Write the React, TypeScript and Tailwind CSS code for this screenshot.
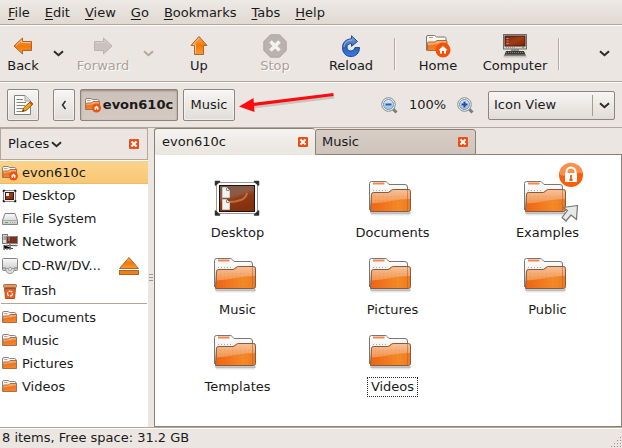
import React, { useState } from "react";

function Gradients() {
  return (
    <svg className="absolute h-0 w-0" aria-hidden="true">
      <defs>
        <linearGradient id="orangeFront" x1="0" y1="0" x2="0.25" y2="1">
          <stop offset="0" stopColor="#f7c49a" />
          <stop offset="0.4" stopColor="#f3a164" />
          <stop offset="0.55" stopColor="#ee7420" />
          <stop offset="1" stopColor="#f5862a" />
        </linearGradient>
        <linearGradient id="folderDeep" x1="0" y1="0" x2="1" y2="0">
          <stop offset="0" stopColor="#ee6414" />
          <stop offset="0.7" stopColor="#f48a26" />
          <stop offset="1" stopColor="#ee7a22" />
        </linearGradient>
        <linearGradient id="folderSheen" x1="0" y1="0" x2="0" y2="1">
          <stop offset="0" stopColor="#f7c096" />
          <stop offset="1" stopColor="#f1954f" />
        </linearGradient>
        <linearGradient id="paper" x1="0" y1="0" x2="0" y2="1">
          <stop offset="0" stopColor="#ffffff" />
          <stop offset="1" stopColor="#dddcd4" />
        </linearGradient>
        <linearGradient id="arrowOrange" x1="0" y1="0" x2="0" y2="1">
          <stop offset="0" stopColor="#f9a65c" />
          <stop offset="0.5" stopColor="#f57900" />
          <stop offset="1" stopColor="#f59a3a" />
        </linearGradient>
        <linearGradient id="reloadBlue" x1="0" y1="0" x2="0" y2="1">
          <stop offset="0" stopColor="#88a9d4" />
          <stop offset="0.55" stopColor="#2c62bd" />
          <stop offset="1" stopColor="#3a78e8" />
        </linearGradient>
        <linearGradient id="screen" x1="0" y1="0" x2="1" y2="1">
          <stop offset="0" stopColor="#6b2a1a" />
          <stop offset="0.5" stopColor="#a23c14" />
          <stop offset="1" stopColor="#7a2208" />
        </linearGradient>
        <linearGradient id="wallpaper" x1="0" y1="0" x2="0.4" y2="1">
          <stop offset="0" stopColor="#7a5b52" />
          <stop offset="0.45" stopColor="#8f5a42" />
          <stop offset="0.6" stopColor="#8c3d1c" />
          <stop offset="1" stopColor="#7c2c0d" />
        </linearGradient>
        <linearGradient id="metal" x1="0" y1="0" x2="0" y2="1">
          <stop offset="0" stopColor="#fafafa" />
          <stop offset="1" stopColor="#c8c8c6" />
        </linearGradient>
        <linearGradient id="lens" x1="0" y1="0" x2="0" y2="1">
          <stop offset="0" stopColor="#e3edf8" />
          <stop offset="1" stopColor="#9dbde6" />
        </linearGradient>
      </defs>
    </svg>
  );
}

function Chevron({ color = "#2e2a28", left = false }: { color?: string; left?: boolean }) {
  return left ? (
    <svg width="6" height="10" viewBox="0 0 6 10" fill="none">
      <path d="M4.5 1 1.5 5l3 4" stroke={color} strokeWidth="1.5" />
    </svg>
  ) : (
    <svg width="11" height="7" viewBox="0 0 11 7" fill="none">
      <path d="M1 1.2 5.5 5.2 10 1.2" stroke={color} strokeWidth="2" />
    </svg>
  );
}

function BackIcon({ dim = false }: { dim?: boolean }) {
  return (
    <svg width="24" height="24" viewBox="0 0 24 24">
      <g transform={dim ? "matrix(-1 0 0 1 24 0)" : undefined}>
        <path
          d="M3 12 11.5 4V7.500H20.500V16.500H11.500V20Z"
          fill={dim ? "#c9c3bd" : "url(#arrowOrange)"}
          stroke={dim ? "#bbb4ae" : "#a8652d"}
          strokeLinejoin="round"
        />
        <path d="M4.800 11.800 10.600 6.300v2.200H19.600" fill="none" stroke={dim ? "#d6d1cc" : "#fbc08a"} />
      </g>
    </svg>
  );
}

function UpIcon() {
  return (
    <svg width="24" height="24" viewBox="0 0 24 24">
      <path d="M12 2.500 20 11.500H16.500V20.500H7.500V11.500H4Z" fill="url(#arrowOrange)" stroke="#a8652d" strokeLinejoin="round" />
      <path d="M12 4.200 6 10.600h2.500v9" fill="none" stroke="#fbc08a" />
    </svg>
  );
}

function StopIcon() {
  return (
    <svg width="24" height="24" viewBox="0 0 24 24">
      <path d="M7.500.8h9l6.700 6.700v9l-6.700 6.700h-9L.8 16.500V7.500Z" fill="#b9b2ae" stroke="#ada6a3" />
      <path d="m7.500 7.500 9 9m0-9-9 9" stroke="#f5f1ee" strokeWidth="3.600" />
    </svg>
  );
}

function ReloadIcon() {
  return (
    <svg width="24" height="24" viewBox="0 0 24 24">
      <path
        d="M12.500 1.800 18.500 7.500 12.500 12.300V9.600C8.800 9.500 7.800 12 8.200 14.200C9.200 18 14.600 18 16 13.500H20.500C20.500 19 17 22.500 12 22.500C6.500 22.500 3.500 18.500 3.500 13.500C3.500 8.500 7 5 12.500 4.800Z"
        fill="url(#reloadBlue)"
        stroke="#1f4a8e"
        strokeLinejoin="round"
      />
      <path d="M5 13c.3-4 3.200-6.800 8-7" fill="none" stroke="#b9cde8" strokeWidth=".7" />
    </svg>
  );
}

function HomeBadge({ cx, cy, r }: { cx: number; cy: number; r: number }) {
  const s = r / 7.5;
  return (
    <g transform={`translate(${cx} ${cy}) scale(${s})`}>
      <circle r="7.5" fill="#f4520b" />
      <path d="M-4.500.3 0-4 4.500.3H3V3.500H1V1H-1V3.500H-3V.3Z" fill="#fff" />
    </g>
  );
}

function HomeIcon() {
  return (
    <svg width="26" height="24" viewBox="0 0 26 24">
      <path d="M1.500 16.500V3Q1.500 1.500 3 1.500H9.500L11.500 3H19.500Q21 3 21 4.500V16" fill="url(#paper)" stroke="#777" />
      <path d="M4 3.500H8" stroke="#f4863c" />
      <path d="M2.500 16.500V9.500Q2.500 8 4 8H10L12 6.500H21Q22 6.500 22 8V16.500Z" fill="url(#orangeFront)" stroke="#b06836" />
      <HomeBadge cx={18} cy={16} r={7.5} />
    </svg>
  );
}

function ComputerIcon() {
  return (
    <svg width="24" height="24" viewBox="0 0 24 24">
      <rect x="0.500" y="0.500" width="23" height="14.500" fill="#d6d6d0" stroke="#6b6b68" />
      <rect x="2" y="2" width="20" height="10" fill="url(#screen)" stroke="#4b1a10" />
      <path d="M3.500 4.500h2M3.500 7h2M3.500 9.500h2" stroke="#e58b6d" />
      <path d="M3 13.500h9" stroke="#999" strokeDasharray="1 1" />
      <path d="M19 13.500h2" stroke="#58bb28" />
      <path d="M8 15h8v2H8Z" fill="#8a8a86" />
      <path d="M3 17H21L23 22H1Z" fill="#3a3a3a" />
      <path d="M3 18.500H21M2.500 20.500H21.500" stroke="#888" strokeDasharray="1 1" />
      <path d="M.5 22.500H23.500" stroke="#c4c4bf" strokeWidth="2" />
    </svg>
  );
}

function EditIcon() {
  return (
    <svg width="22" height="22" viewBox="0 0 22 22">
      <path d="M2.500 1.500H13L18.500 7V20.500H2.500Z" fill="#fbfbfa" stroke="#82807c" strokeLinejoin="round" />
      <path d="M13 1.500V7H18.500" fill="#dedddb" stroke="#a2a09d" />
      <path d="M4.500 5.500H11M4.500 8.500H14M4.500 11.500H13M4.500 14.500H11M4.500 17.500H10" stroke="#858583" />
      <path d="M10.500 17.500 11.500 14 18.500 7.500 21 10 14 16.500Z" fill="#f7a511" stroke="#8e4d16" />
      <path d="m18.500 7.500 2.500 2.500-1.400 1.300-2.600-2.500Z" fill="#e34829" />
      <path d="m10.500 17.500.5-1.700 1.300 1.200Z" fill="#222" />
    </svg>
  );
}

function SmallFolder({ home = false }: { home?: boolean }) {
  return (
    <svg width="16" height="16" viewBox="0 0 16 16" className="shrink-0">
      <path d="M.5 12.500V3Q.5 1.500 2 1.500H6L7.500 2.500H12.500Q14 2.500 14 4V12" fill="url(#paper)" stroke="#858585" />
      <path d="M2 3.500H5.500" stroke="#f6975d" />
      <path d="M.8 12.500V7.500Q.8 6 2.500 6H6.500L8 4.500H14.500V12.500Z" fill="url(#orangeFront)" stroke="#ad6d49" />
      {home && <HomeBadge cx={11.5} cy={11} r={4.5} />}
    </svg>
  );
}

function SmallDesktop() {
  return (
    <svg width="16" height="16" viewBox="0 0 16 16" className="shrink-0">
      <rect x="1.500" y="2.500" width="12" height="11" fill="#f4f4f4" stroke="#888" />
      <rect x="3.500" y="4.500" width="8" height="7" fill="url(#screen)" stroke="#3c1810" />
      <rect x="4" y="5" width="3" height="3" fill="#f1efed" />
      <path d="M1.500 4V2.500H3M12 2.500h1.500V4M13.500 12v1.500H12M3 13.500H1.500V12" fill="none" stroke="#222" strokeWidth="1.500" />
    </svg>
  );
}

function DriveIcon() {
  return (
    <svg width="16" height="16" viewBox="0 0 16 16" className="shrink-0">
      <path d="M3 2.500H13L15.500 9.500V13.500H.5V9.500Z" fill="url(#metal)" stroke="#858585" strokeLinejoin="round" />
      <path d="M1 9.500H15" stroke="#aaa" />
      <path d="M3 11.500H6" stroke="#4fb51f" />
      <path d="M8 11.500h6" stroke="#aaa" strokeDasharray="1 1" />
    </svg>
  );
}

function NetworkIcon() {
  return (
    <svg width="16" height="16" viewBox="0 0 16 16" className="shrink-0">
      <rect x=".5" y=".5" width="5" height="9" fill="#ddd" stroke="#777" />
      <path d="M1.500 3h3M1.500 5h3" stroke="#666" />
      <rect x="4.500" y="2.500" width="11" height="7" fill="#7a3020" stroke="#888" />
      <path d="M6 4h2M6 6h2" stroke="#d98c73" />
      <path d="M5 11.500H15.500M2 11v3.500H11M8 10v4" stroke="#444" />
      <path d="M4 11.500H15M1 15h9" stroke="#777" strokeWidth="1.500" strokeDasharray="2 1" />
    </svg>
  );
}

function DiscIcon() {
  return (
    <svg width="16" height="16" viewBox="0 0 16 16" className="shrink-0">
      <rect x=".5" y=".5" width="15" height="12" rx="1" fill="url(#metal)" stroke="#858585" />
      <path d="M1 10h3M12 10h3" stroke="#777" />
      <path d="M3.500 10.500h9Q12 15.500 8 15.500T3.500 10.500Z" fill="#ddd" stroke="#999" />
      <circle cx="8" cy="11" r="1.500" fill="#fff" stroke="#999" />
    </svg>
  );
}

function TrashIcon() {
  return (
    <svg width="16" height="16" viewBox="0 0 16 16" className="shrink-0">
      <path d="M2.500 5H13.500L12.500 15.500H3.500Z" fill="#ed5d19" stroke="#b5501d" />
      <rect x="1.500" y="1.500" width="13" height="3" rx="1" fill="#f5934f" stroke="#9d7058" />
      <path d="M3 5.500H13" stroke="#6f5f58" />
      <circle cx="8" cy="10.500" r="2.500" fill="none" stroke="#fff" strokeWidth="1.200" strokeDasharray="4 1" />
    </svg>
  );
}

function EjectIcon() {
  return (
    <svg width="22" height="20" viewBox="0 0 22 20">
      <path d="M11 1.500 20.500 12.500H1.500Z" fill="url(#arrowOrange)" stroke="#a8652d" strokeLinejoin="round" />
      <rect x="1.500" y="14.500" width="19" height="4" fill="#f57f17" stroke="#a8652d" />
    </svg>
  );
}

function ZoomIcon({ plus = false }: { plus?: boolean }) {
  return (
    <svg width="17" height="17" viewBox="0 0 17 17">
      <path d="m11.500 11.500 4 4" stroke="#7b7b78" strokeWidth="3" />
      <circle cx="7.500" cy="7.500" r="6.800" fill="#f0f0ec" stroke="#8b8c89" />
      <circle cx="7.500" cy="7.500" r="5" fill="url(#lens)" stroke="#6b95cc" />
      <path d={plus ? "M4.500 7.500h6M7.500 4.500v6" : "M4.500 7.500h6"} stroke={plus ? "#244f91" : "#315f9f"} strokeWidth="2" />
    </svg>
  );
}

function CloseIcon() {
  return (
    <svg width="10" height="10" viewBox="0 0 10 10">
      <rect width="10" height="10" rx="1" fill="#ee4f16" />
      <path d="m2.500 2.500 5 5m0-5-5 5" stroke="#fff" strokeWidth="2" />
    </svg>
  );
}

function BigFolder({ locked = false }: { locked?: boolean }) {
  return (
    <svg width="53" height="48" viewBox="0 0 53 48" overflow="visible">
      <path d="M5 40H44" stroke="#000" strokeOpacity=".22" strokeWidth="2" strokeLinecap="round" />
      <path d="M6 41.500H43" stroke="#000" strokeOpacity=".1" strokeWidth="2" strokeLinecap="round" />
      <path d="M3.500 37V10.500Q3.500 8.500 5.500 8.500H19Q20.500 8.500 21.500 9.800L23 11.500H39Q41.500 11.500 41.500 14V36" fill="url(#paper)" stroke="#777874" />
      <path d="M7 10.500H18.500" stroke="#f4864b" strokeWidth="2" />
      <path d="M7 17.500H22" stroke="#aaa" strokeDasharray="1 2" />
      <path
        d="M4.500 38.500 5.500 21.500Q5.500 19.500 7.500 19.500H22Q23 19.500 24 18.300L25.300 17.300Q26 16.500 27.500 16.500H42.500Q44.500 16.500 44.500 18.500V36.500Q44.500 38.500 42.500 38.500Z"
        fill="url(#folderDeep)"
        stroke="#825c44"
      />
      <path d="M6 30.500V22Q6 20 8 20H22Q24 20 25.500 18 26.500 17 28 17H42Q44 17 44 19V26C31 26 19 29.500 6 30.500Z" fill="url(#folderSheen)" />
      <path d="M9 23.500H42M9 27.500H42M9 31.500H42M9 35.500H42" stroke="#d9601a" strokeOpacity=".22" strokeDasharray="1 3" />
      <path d="M41.500 17V38" stroke="#b9602a" strokeOpacity=".55" />
      {locked && (
        <g>
          <circle cx="50" cy="2" r="12" fill="#f75f0d" />
          <path d="M38.500 1.500a11.500 11.500 0 0 1 23-1C54-3 48 6 38.500 1.500Z" fill="#fbab72" opacity=".65" />
          <path d="M45.500 1v-2a4.500 4.500 0 0 1 9 0v2" fill="none" stroke="#fff" strokeWidth="2" />
          <rect x="44" y="0" width="12" height="9" fill="#fff" />
          <path d="M50 2v5M48.500 7h3" stroke="#e65c10" strokeWidth="1.800" />
          <path
            d="M56.500 32.500 42 34.500 46.500 37.500 41 44.500 45 48 50 42 55.500 46.500Z"
            fill="#e8e9e6"
            stroke="#747672"
            strokeWidth="1.200"
            strokeLinejoin="round"
          />
        </g>
      )}
    </svg>
  );
}

function BigDesktop() {
  return (
    <svg width="53" height="48" viewBox="0 0 53 48">
      <rect x="5.500" y="9.500" width="41" height="31" fill="#fff" stroke="#999" />
      <rect x="8.500" y="12.500" width="35" height="26" fill="url(#wallpaper)" stroke="#25110b" />
      <path d="M9 29Q19 27 26 28T43 21V38H9Z" fill="#8e3510" opacity=".5" />
      <path d="M18 29Q25 29 30 27T36 20" fill="none" stroke="#e79150" strokeOpacity=".6" strokeWidth="2" />
      <path d="M11.500 14.500h4l3 3v7h-7ZM11.500 26.500h4l3 3v7h-7Z" fill="#f2f2f0" stroke="#ccc" />
      <path d="M15.500 15v2.500h2.500M15.500 27v2.500h2.500" fill="none" stroke="#888" />
      <path d="M4.500 12V8.500H8.500ZM43.500 8.500h4V12ZM47.500 38v4h-4ZM8.500 42H4.500v-4Z" fill="#222" stroke="#333" strokeWidth="1.500" strokeLinejoin="round" />
    </svg>
  );
}

const menus = ["File", "Edit", "View", "Go", "Bookmarks", "Tabs", "Help"];

function ToolButton({ label, icon, width, disabled }: { label: string; icon: React.ReactNode; width: string; disabled?: boolean }) {
  return (
    <button
      disabled={disabled}
      className={`flex h-full flex-col items-center pt-2 ${width} ${disabled ? "text-[#aaa198] [text-shadow:1px_1px_0_#fff]" : ""}`}
    >
      {icon}
      <span className="leading-4">{label}</span>
    </button>
  );
}

function Separator() {
  return <div className="h-8 w-[2px] shrink-0 border-l border-r border-l-[#b5a99c] border-r-[#f8f6f4]" />;
}

const box =
  "flex h-8 items-center justify-center rounded-[2px] border border-[#8e867c] bg-linear-to-b from-[#f7f6f4] to-[#e1dcd6] shadow-[inset_0_0_0_1px_#ffffff80]";

const places = [
  { name: "evon610c", icon: <SmallFolder home /> },
  { name: "Desktop", icon: <SmallDesktop /> },
  { name: "File System", icon: <DriveIcon /> },
  { name: "Network", icon: <NetworkIcon /> },
  { name: "CD-RW/DV...", icon: <DiscIcon />, eject: true },
  { name: "Trash", icon: <TrashIcon /> },
];
const bookmarks = ["Documents", "Music", "Pictures", "Videos"];
const files = ["Desktop", "Documents", "Examples", "Music", "Pictures", "Public", "Templates", "Videos"];

export default function App() {
  const [tab, setTab] = useState("evon610c");
  return (
    <div className="flex h-screen flex-col overflow-hidden bg-[#ebe6e2] font-['DejaVu_Sans',sans-serif] text-[13px] leading-4 text-[#1a1a1a]">
      <Gradients />
      <nav className="flex h-[25px] shrink-0 items-center gap-px border-b border-[#b5a698] bg-linear-to-b from-[#ede9e5] to-[#e1d9d2] pt-px pl-px">
        {menus.map((m) => (
          <button key={m} className="px-[7px]">
            <span className="underline underline-offset-2">{m[0]}</span>
            {m.slice(1)}
          </button>
        ))}
      </nav>

      <div className="flex h-[57px] shrink-0 items-center border-t border-b border-t-white border-b-[#b5a698]">
        <ToolButton label="Back" width="w-[46px]" icon={<BackIcon />} />
        <button aria-label="Back history" className="flex w-6 justify-center">
          <Chevron />
        </button>
        <ToolButton label="Forward" width="w-[66px]" icon={<BackIcon dim />} disabled />
        <button aria-label="Forward history" disabled className="flex w-[25px] justify-center">
          <Chevron color="#b1a99f" />
        </button>
        <ToolButton label="Up" width="w-[76px]" icon={<UpIcon />} />
        <ToolButton label="Stop" width="w-[76px]" icon={<StopIcon />} disabled />
        <ToolButton label="Reload" width="w-[76px]" icon={<ReloadIcon />} />
        <div className="w-[5px]" />
        <Separator />
        <div className="w-1" />
        <ToolButton label="Home" width="w-[76px]" icon={<HomeIcon />} />
        <ToolButton label="Computer" width="w-[78px]" icon={<ComputerIcon />} />
        <div className="w-1" />
        <Separator />
        <button aria-label="More tools" className="mr-3 ml-auto">
          <Chevron />
        </button>
      </div>

      <div className="relative flex h-[46px] shrink-0 items-center border-t border-b border-t-white border-b-[#b5a698] px-[7px]">
        <button aria-label="Edit location" className={`${box} w-8`}>
          <EditIcon />
        </button>
        <button aria-label="Previous folders" className={`${box} ml-[14px] w-[22px]`}>
          <Chevron left />
        </button>
        <button className="ml-[5px] flex h-8 w-[98px] items-center justify-center gap-[2px] rounded-[2px] border border-[#8e8279] bg-linear-to-b from-[#cdc2b9] to-[#d4cac1] font-bold shadow-[inset_0_1px_2px_#978a7f]">
          <SmallFolder home />
          evon610c
        </button>
        <button className={`${box} ml-[5px] w-[52px]`}>Music</button>
        <svg className="absolute top-1 left-[230px]" width="112" height="34" viewBox="0 0 112 34">
          <path d="M104 10 23 20" stroke="#777" strokeOpacity=".3" strokeWidth="3" />
          <path d="M103.500 7.500 23 17.500" stroke="#fb0b0b" strokeWidth="3" />
          <path d="M9 19.500 23.500 11 24.500 25Z" fill="#fb0b0b" />
        </svg>
        <div className="ml-auto flex items-center">
          <button aria-label="Zoom out">
            <ZoomIcon />
          </button>
          <span className="w-[59px] text-center">100%</span>
          <button aria-label="Zoom in">
            <ZoomIcon plus />
          </button>
          <div className="relative ml-[14px] h-[29px] w-[127px]">
            <select
              aria-label="View mode"
              className="h-full w-full appearance-none rounded-[2px] border border-[#8e867c] bg-linear-to-b from-[#f7f6f4] to-[#e1dcd6] pl-[5px]"
            >
              <option>Icon View</option>
              <option>List View</option>
            </select>
            <div className="pointer-events-none absolute inset-y-1 right-0 flex w-[23px] items-center justify-center border-l border-[#a79c90]">
              <Chevron />
            </div>
          </div>
        </div>
      </div>

      <main className="flex min-h-0 flex-1">
        <aside className="flex w-[148px] shrink-0 flex-col bg-white">
          <div className="flex h-8 shrink-0 items-center justify-between border border-[#b5a698] bg-[#ebe6e2] pr-2 pl-[7px]">
            <button className="flex items-center gap-[2px]">
              Places
              <Chevron />
            </button>
            <button aria-label="Close side pane">
              <CloseIcon />
            </button>
          </div>
          <ul className="pt-px">
            {places.map((p, i) => (
              <li
                key={p.name}
                className={`flex items-center pl-[2px] ${p.eject ? "h-[26px]" : "h-[23px]"} ${
                  i === 0 ? "bg-linear-to-b from-[#fdd38b] to-[#f8c773] shadow-[inset_0_-1px_0_#e8bd6c]" : ""
                }`}
              >
                {p.icon}
                <span className="ml-1">{p.name}</span>
                {p.eject && (
                  <button aria-label="Eject" className="mr-2 ml-auto">
                    <EjectIcon />
                  </button>
                )}
              </li>
            ))}
          </ul>
          <hr className="mx-px mt-px mb-[2px] border-[#b5a698]" />
          <ul>
            {bookmarks.map((b) => (
              <li key={b} className="flex h-[23px] items-center gap-1 pl-[2px]">
                <SmallFolder />
                {b}
              </li>
            ))}
          </ul>
        </aside>
        <div className="flex w-[6px] shrink-0 items-center justify-center">
          <div className="flex flex-col gap-[2px]">
            <div className="h-px w-1 bg-[#a3978b]" />
            <div className="h-px w-1 bg-[#a3978b]" />
            <div className="h-px w-1 bg-[#a3978b]" />
          </div>
        </div>
        <section className="flex min-w-0 flex-1 flex-col">
          <div role="tablist" className="flex h-[27px] shrink-0 items-end">
            {["evon610c", "Music"].map((t) => (
              <div
                key={t}
                className={`flex w-[161px] items-center justify-between rounded-t-[3px] border-[#8e8071] pr-[7px] ${
                  t === tab
                    ? "h-[27px] border-t border-l bg-linear-to-b from-[#f5f3f0] to-[#e9e5df] pl-[7px]"
                    : "h-[26px] border bg-linear-to-b from-[#d8cec6] to-[#cec4bb] pl-[6px]"
                }`}
              >
                <button role="tab" aria-selected={t === tab} onClick={() => setTab(t)}>
                  {t}
                </button>
                <button aria-label={`Close ${t}`}>
                  <CloseIcon />
                </button>
              </div>
            ))}
            <div className="flex-1 self-stretch border-b border-[#8e8071]" />
          </div>
          <div className="min-h-0 flex-1 border-r border-b border-l border-[#8e8071] bg-white pt-[18px] pl-[10px]">
            <ul className="grid grid-cols-[repeat(auto-fill,145px)] gap-x-[10px] gap-y-[7px]">
              {files.map((f) => (
                <li key={f} className="flex h-[70px] flex-col items-center gap-[2px]">
                  {f === "Desktop" ? <BigDesktop /> : <BigFolder locked={f === "Examples"} />}
                  <span className={`h-5 border border-dotted px-[3px] leading-[18px] ${f === "Videos" ? "border-[#222]" : "border-transparent"}`}>
                    {f}
                  </span>
                </li>
              ))}
            </ul>
          </div>
        </section>
      </main>

      <footer className="flex h-[21px] shrink-0 items-center justify-between border-t border-[#b5a698] pl-[2px] shadow-[inset_0_1px_0_#fff]">
        <span>8 items, Free space: 31.2 GB</span>
        <svg width="12" height="12" viewBox="0 0 12 12" className="self-end">
          <path d="M10 1h1v1h-1zM7 4h1v1H7zM10 4h1v1h-1zM4 7h1v1H4zM7 7h1v1H7zM10 7h1v1h-1zM1 10h1v1H1zM4 10h1v1H4zM7 10h1v1H7zM10 10h1v1h-1z" fill="#978b80" />
        </svg>
      </footer>
    </div>
  );
}
